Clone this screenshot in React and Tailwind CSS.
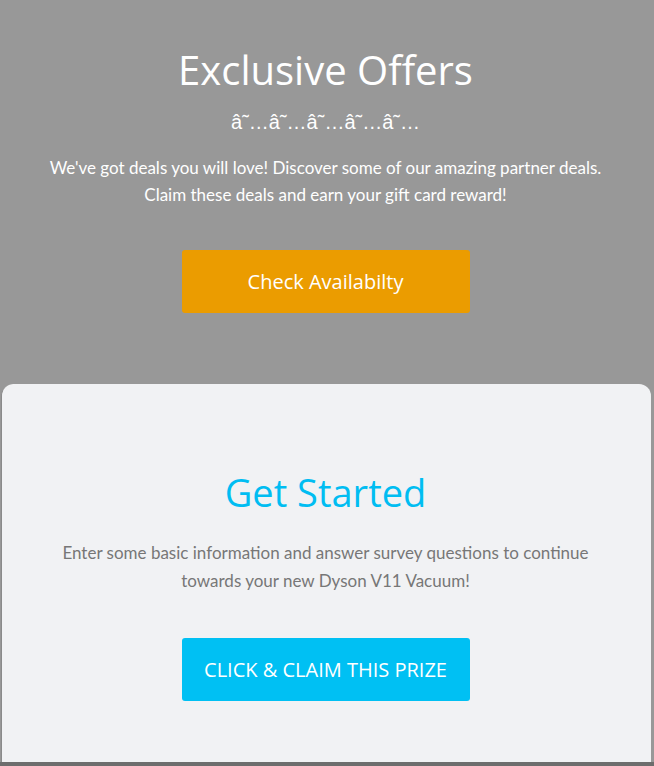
export default function App() {
  return (
    <div className="w-[654px] h-[766px] bg-[#989898] overflow-hidden flex flex-col">
      <div className="flex flex-col items-center pt-[44px] pr-[3px] h-[384px] shrink-0">
        <h1 className="text-[40px] leading-[52px] text-white font-['Open_Sans',sans-serif] font-normal">Exclusive Offers</h1>
        <div className="mt-[14px] text-[20px] leading-[24px] text-white font-['Liberation_Sans',sans-serif]">â˜…â˜…â˜…â˜…â˜…</div>
        <p className="mt-[20px] text-center text-[17px] leading-[27px] text-white font-['Lato',sans-serif] font-normal">
          We've got deals you will love! Discover some of our amazing partner deals.<br />
          Claim these deals and earn your gift card reward!
        </p>
        <button className="mt-[42px] w-[288px] h-[63px] rounded-[3px] bg-[#eb9c00] text-white text-[20px] font-['Open_Sans',sans-serif]">Check Availabilty</button>
      </div>
      <div className="ml-[1px] mr-[3px] h-[378px] shrink-0 rounded-t-[12px] bg-[#f1f2f4] border-l border-[#8a8a8a] flex flex-col items-center pt-[86px] pr-[2px]">
        <h2 className="text-[38px] leading-[44px] text-[#00bdf2] font-['Open_Sans',sans-serif] font-normal">Get Started</h2>
        <p className="mt-[25px] text-center text-[17px] leading-[28px] text-[#777777] font-['Lato',sans-serif] font-normal">
          Enter some basic information and answer survey questions to continue<br />
          towards your new Dyson V11 Vacuum!
        </p>
        <button className="mt-[43px] w-[288px] h-[63px] rounded-[3px] bg-[#00c0f3] text-white text-[20px] font-['Open_Sans',sans-serif] uppercase">Click &amp; Claim this prize</button>
      </div>
      <div className="h-[4px] bg-[#6d6d6d]"></div>
    </div>
  );
}
